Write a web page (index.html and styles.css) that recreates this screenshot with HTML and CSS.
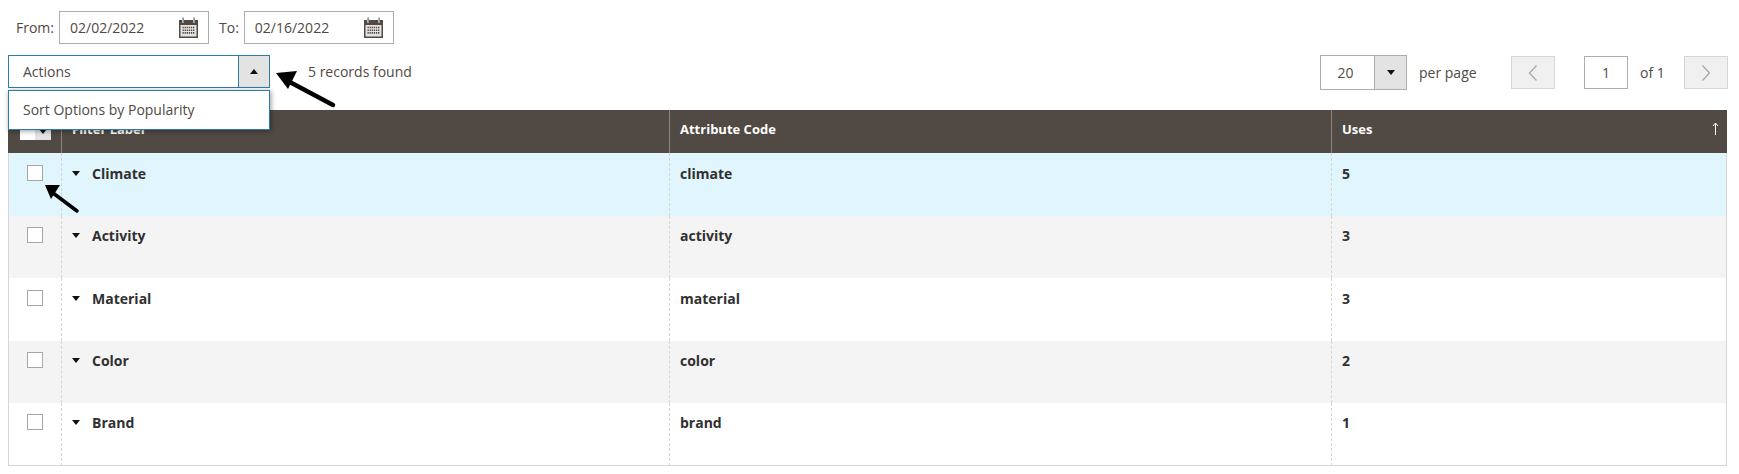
FILE: index.html
```html
<!DOCTYPE html>
<html lang="en">
<head>
<meta charset="utf-8">
<title>Filter Options</title>
<link rel="stylesheet" href="styles.css">
</head>
<body>
<svg class="defs" width="0" height="0" aria-hidden="true">
  <symbol id="cal" viewBox="0 0 21 21">
    <path fill="#514943" d="M1 3h3v2.500h2V3h9v2.500h2V3h3v18H1z"/>
    <path fill="#514943" d="M4.600 .6h1v4.400h-1zM15.600 .6h1v4.400h-1z"/>
    <rect x="2.500" y="8" width="16" height="11.500" fill="#e6e3df"/>
    <path stroke="#514943" stroke-width="1.600" stroke-dasharray="1.300 .8" fill="none" d="M4.500 10.500h12M4.500 13.200h12M4.500 15.900h12"/>
  </symbol>
</svg>
<div class="dates">
  <label class="date-label">From:</label>
  <div class="date-box"><span>02/02/2022</span><svg class="cal"><use href="#cal"/></svg></div>
  <label class="date-label">To:</label>
  <div class="date-box"><span>02/16/2022</span><svg class="cal"><use href="#cal"/></svg></div>
</div>
<div class="toolbar">
  <div class="actions">
    <div class="actions-head">
      <span class="actions-text">Actions</span>
      <span class="actions-btn"><i class="tri up"></i></span>
    </div>
    <div class="actions-menu">Sort Options by Popularity</div>
  </div>
  <span class="records">5 records found</span>
  <div class="pager">
    <div class="perpage"><span class="perpage-val">20</span><span class="perpage-btn"><i class="tri down"></i></span></div>
    <span class="perpage-label">per page</span>
    <span class="nav prev"><svg width="10" height="18" viewBox="0 0 10 18"><path d="M8.500 1.500 1.500 9l7 7.500" fill="none" stroke="#aaa7a4" stroke-width="1.300"/></svg></span>
    <span class="page-input">1</span>
    <span class="page-of">of 1</span>
    <span class="nav"><svg width="10" height="18" viewBox="0 0 10 18"><path d="M1.500 1.500 8.500 9l-7 7.500" fill="none" stroke="#aaa7a4" stroke-width="1.300"/></svg></span>
  </div>
</div>
<table class="grid">
  <thead>
    <tr>
      <th class="c-check"><span class="mass"><span class="mass-box"></span><span class="mass-btn"><i class="tri down small"></i></span></span></th>
      <th class="c-label">Filter Label</th>
      <th class="c-code">Attribute Code</th>
      <th class="c-uses"><div class="uses-head"><span>Uses</span><svg class="sort" width="7" height="13" viewBox="0 0 7 13"><path d="M3.500 1v12M1 4 3.500 1 6 4" fill="none" stroke="#fff" stroke-width="1"/></svg></div></th>
    </tr>
  </thead>
  <tbody>
    <tr class="hl tall"><td><span class="check"></span></td><td class="name"><i class="tri down"></i>Climate</td><td>climate</td><td>5</td></tr>
    <tr class="alt"><td><span class="check"></span></td><td class="name"><i class="tri down"></i>Activity</td><td>activity</td><td>3</td></tr>
    <tr class="tall"><td><span class="check"></span></td><td class="name"><i class="tri down"></i>Material</td><td>material</td><td>3</td></tr>
    <tr class="alt"><td><span class="check"></span></td><td class="name"><i class="tri down"></i>Color</td><td>color</td><td>2</td></tr>
    <tr class="end"><td><span class="check"></span></td><td class="name"><i class="tri down"></i>Brand</td><td>brand</td><td>1</td></tr>
  </tbody>
</table>
<svg class="arrow arrow-a" width="62" height="40" viewBox="0 0 62 40"><path d="M57 35 10 10" stroke="#000" stroke-width="4.500" stroke-linecap="round"/><path d="M0 3 21 1 12 19z" fill="#000"/></svg>
<svg class="arrow arrow-b" width="40" height="32" viewBox="0 0 40 32"><path d="M32 27 8 9" stroke="#000" stroke-width="3.500" stroke-linecap="round"/><path d="M0 1 15 1 6 15z" fill="#000"/></svg>
</body>
</html>
```
FILE: styles.css
```css
* { box-sizing: border-box; }
html, body { margin: 0; padding: 0; }
body {
  position: relative;
  width: 1739px;
  height: 474px;
  overflow: hidden;
  background: #fff;
  font-family: "Open Sans", "Liberation Sans", sans-serif;
  font-size: 14px;
  color: #514943;
}
.defs { position: absolute; }
.tri { display: inline-block; width: 0; height: 0; border-left: 4.500px solid transparent; border-right: 4.500px solid transparent; }
.tri.down { border-top: 5px solid #111; }
.tri.up { border-bottom: 5px solid #111; }
.tri.small { border-left-width: 4px; border-right-width: 4px; border-top-width: 5px; }

.dates { display: flex; align-items: center; height: 33px; margin-top: 11px; padding-left: 16px; }
.date-label { margin-right: 5px; }
.date-box {
  display: flex; align-items: center; justify-content: space-between;
  width: 150px; height: 33px; margin-right: 10px; padding: 0 9px 0 10px;
  border: 1px solid #adadad;
}
.cal { width: 21px; height: 21px; }

.toolbar { display: flex; align-items: flex-start; height: 33px; margin-top: 11px; padding-left: 8px; padding-right: 11px; }
.actions { position: relative; width: 262px; height: 33px; }
.actions-head { display: flex; height: 33px; border: 1px solid #2d7da6; }
.actions-text { flex: 1; padding-left: 14px; line-height: 31px; }
.actions-btn { display: flex; align-items: center; justify-content: center; width: 31px; background: #e3e3e3; border-left: 1px solid #2d7da6; }
.actions-menu {
  position: absolute; left: 0; top: 35px; z-index: 2;
  width: 262px; height: 40px; padding-left: 14px; line-height: 38px;
  background: #fff; border: 1px solid #2d7da6;
  box-shadow: 1px 1px 5px rgba(0,0,0,.4);
}
.records { margin-left: 38px; line-height: 33px; }
.pager { display: flex; align-items: center; margin-left: auto; height: 35px; }
.perpage { display: flex; width: 87px; height: 35px; border: 1px solid #adadad; }
.perpage-val { flex: 1; padding-right: 4px; text-align: center; line-height: 33px; }
.perpage-btn { display: flex; align-items: center; justify-content: center; width: 32px; background: #e3e3e3; border-left: 1px solid #adadad; }
.perpage-label { margin-left: 12px; width: 92px; }
.nav { display: flex; align-items: center; justify-content: center; width: 44px; height: 33px; background: #f0f0f0; border: 1px solid #d6d6d6; }
.page-input { width: 44px; height: 33px; margin-left: 29px; border: 1px solid #adadad; text-align: center; line-height: 31px; }
.page-of { width: 56px; padding-left: 12px; }

.grid {
  width: 1719px; margin: 22px 0 0 8px;
  border-collapse: separate; border-spacing: 0; table-layout: fixed;
}
.grid th {
  height: 43px; padding: 0 10px 6px; text-align: left; font-size: 13px; font-weight: 700; color: #fff;
  background: #514943; border-left: 1px solid #8a837e;
}
.grid th:first-child { border-left: 0; }
.grid th:last-child { padding-right: 8px; }
.grid td {
  height: 62px; padding: 11px 10px 0; vertical-align: top; font-size: 14px; font-weight: 700; color: #303030;
  border-left: 1px dashed #d6d6d6; line-height: 17px;
}
.grid .tall td { height: 63px; padding-top: 12px; }
.grid .end td { height: 63px; border-bottom: 1px solid #d6d6d6; }
.grid td:first-child { border-left: 1px solid #d6d6d6; padding-left: 18px; }
.grid td:last-child { border-right: 1px solid #d6d6d6; }
.c-check { width: 53px; }
.c-label { width: 608px; }
.c-code { width: 662px; }
.hl td { background: #e1f5fd; }
.alt td { background: #f4f4f4; }
.name .tri { margin: 0 12px 3px 0; vertical-align: middle; }
.check { display: block; width: 16px; height: 16px; background: #fff; border: 1px solid #a6a6a6; }
.mass { display: flex; width: 31px; height: 16px; margin-left: 2px; margin-top: 6px; }
.mass-box { width: 15px; background: #fff; }
.mass-btn { display: flex; align-items: center; justify-content: center; width: 16px; background: #e3e3e3; }
.uses-head { display: flex; justify-content: space-between; align-items: center; }

.arrow { position: absolute; z-index: 3; }
.arrow-a { left: 276px; top: 70px; }
.arrow-b { left: 45px; top: 184px; }
```
